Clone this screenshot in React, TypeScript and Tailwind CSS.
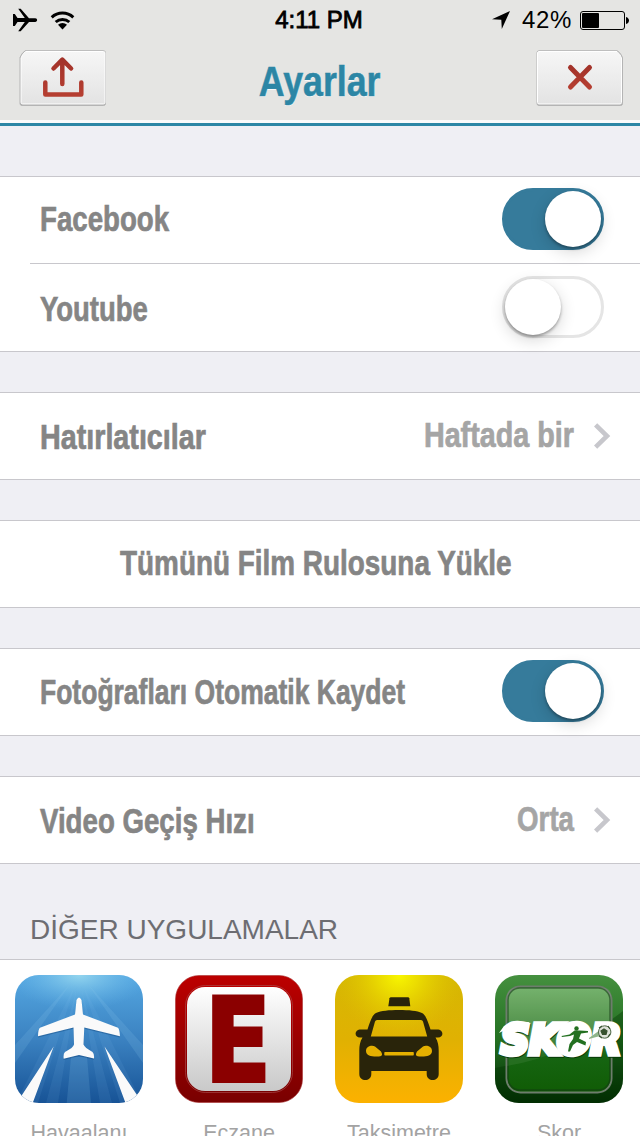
import type { ReactNode } from "react";
import clsx from "clsx";

const StatusBar = () => (
	<div className="grid h-10 grid-cols-3 items-center text-[24px] leading-10 text-black">
		<div className="flex items-center gap-3 pl-3">
			<svg width="26" height="24" viewBox="0 0 26 24">
				<path d="M1 6h1.800l2.700 3.900h7.300L6.200.8h2.500l8.300 9.400h6.200c2.600 0 2.600 3.700 0 3.700h-6.200L8.700 23.300H6.200l6.600-9.200H5.500L2.800 18H1V6z" />
			</svg>
			<svg width="26" height="20" viewBox="0 0 26 20" fill="none" stroke="#000" strokeWidth="3">
				<path d="M1.700 7.300a16 16 0 0 1 21.600 0M5.700 12a10.200 10.200 0 0 1 13.600 0" />
				<path d="M12.500 19.500 8 14.800a6.300 6.300 0 0 1 9 0z" fill="#000" stroke="none" />
			</svg>
		</div>
		<span className="text-center">
			<span className="inline-block pr-0.5 [-webkit-text-stroke:0.8px_#000]">4:11 PM</span>
		</span>
		<div className="flex items-center justify-end pr-[11px]">
			<svg width="18" height="18" viewBox="0 0 18 18" className="mr-3">
				<path d="M18 0 9.800 18 9.300 8.700 0 8.200z" />
			</svg>
			<span className="mr-2 w-[50px] tracking-[0.6px]">42%</span>
			<svg width="49" height="19" viewBox="0 0 49 19">
				<rect x=".5" y=".5" width="44" height="18" rx="2.500" fill="none" stroke="#000" />
				<rect x="2" y="2" width="17" height="15" rx="1" />
				<path d="M46 6c4 1 4 6 0 7z" />
			</svg>
		</div>
	</div>
);

const HeaderButton = ({ flip, label, children }: { flip?: boolean; label: string; children: ReactNode }) => (
	<button aria-label={label} className="h-[57px] w-[88px]">
		<svg width="88" height="57" viewBox="0 0 88 57" fill="none">
			<defs>
				<linearGradient id="btn" x1="0" y1="0" x2="0" y2="1">
					<stop offset="0" stopColor="#f6f6f6" />
					<stop offset="1" stopColor="#e3e3e3" />
				</linearGradient>
				<linearGradient id="red" x1="0" y1="0" x2="0" y2="1">
					<stop offset="0" stopColor="#a3332a" />
					<stop offset="1" stopColor="#b53e31" />
				</linearGradient>
			</defs>
			<g transform={flip ? "matrix(-1 0 0 1 87.500 0)" : undefined}>
				<path d="M6 .8h78.500q2 0 2 2V53.500q0 2-2 2H3q-2 0-2-2V7.500Q2.500 3.500 6 .8z" fill="#aaa" stroke="#b4b4b4" />
				<path d="M6.500 1.500h78q1.500 0 1.500 1.500V52.500q0 1.500-1.500 1.500H3.500Q2 54 2 52.500V8Q3 4.500 6.500 1.500z" fill="url(#btn)" stroke="#fff" />
			</g>
			{children}
		</svg>
	</button>
);

const Switch = ({ on }: { on?: boolean }) => (
	<span
		role="switch"
		aria-checked={!!on}
		className={clsx(
			"flex h-[62px] w-[102px] items-center rounded-full border-3",
			on ? "justify-end border-[#367b9b] bg-[#367b9b]" : "border-[#e5e5e5] bg-white"
		)}
	>
		<span className="size-14 rounded-full bg-white shadow-[0_2px_3px_rgba(0,0,0,0.32),0_5px_16px_rgba(0,0,0,0.16)]" />
	</span>
);

const Chevron = () => (
	<svg width="18" height="26" viewBox="0 0 18 26" fill="none" stroke="#c7c7cc" strokeWidth="4.600">
		<path d="M1.600 1.800 13 13 1.600 24.200" />
	</svg>
);

const Group = ({ children }: { children: ReactNode }) => (
	<section className="mb-10 border-y border-[#c8c7cc] bg-white">{children}</section>
);

const Row = ({ children }: { children: ReactNode }) => (
	<div className="flex h-[86px] items-center justify-between pl-10">{children}</div>
);

const label =
	"inline-block origin-left whitespace-nowrap font-bold leading-[84px] text-[#858585] [-webkit-text-stroke:0.7px_#858585]";
const value =
	"inline-block origin-right whitespace-nowrap font-bold leading-[80px] pb-0.5 text-[#a5a5a5] [-webkit-text-stroke:0.7px_#a5a5a5]";

const PlaneIcon = () => (
	<svg width="128" height="128" viewBox="0 0 128 128">
		<defs>
			<linearGradient id="sky" x1="0" y1="0" x2="0" y2="1">
				<stop offset="0" stopColor="#55a8e2" />
				<stop offset=".5" stopColor="#3b82c1" />
				<stop offset="1" stopColor="#175396" />
			</linearGradient>
			<radialGradient id="glow" cx=".5" cy="0" r=".55" gradientTransform="matrix(1 0 0 .5 0 0)">
				<stop offset="0" stopColor="#93d5ee" />
				<stop offset="1" stopColor="#65b4e7" stopOpacity="0" />
			</radialGradient>
			<clipPath id="skyClip">
				<rect width="128" height="128" rx="24" />
			</clipPath>
		</defs>
		<g clipPath="url(#skyClip)">
			<path d="M0 0h128v128H0z" fill="url(#sky)" />
			<path d="M0 0h128v128H0z" fill="url(#glow)" />
			<path d="M56 8 0 70v18zM72 8l56 62v18zM56 82h16l4 46H51.700z" fill="#8cc8f0" opacity=".17" />
			<path d="M60 10 5 120l18 8zM68 10l55 110-18 8zM62 12 31 128h12zM66 12l31 116H85z" fill="#8cc8f0" opacity=".09" />
			<path d="M38.700 71.500 7 120v8h10.700zM89.500 71.500 122 120v8h-11.500z" fill="#fafafa" />
			<path
				d="M61.500 25q2.500-5 5 0L68 39.500l35 13.300q1.500 1 2 8.500L69.300 52.500 68.500 69.500q1 3 9 7.500 2 2 1.500 6.500L64 80l-15.300 3.700Q48 79 50 77q8.500-4.500 9-7.500L58.500 52.500 23 61.300q0-7 2-8.500l35-13.300z"
				transform="translate(0 1.300)"
				fill="#0c3c70"
				opacity=".35"
			/>
			<path
				d="M61.500 25q2.500-5 5 0L68 39.500l35 13.300q1.500 1 2 8.500L69.300 52.500 68.500 69.500q1 3 9 7.500 2 2 1.500 6.500L64 80l-15.300 3.700Q48 79 50 77q8.500-4.500 9-7.500L58.500 52.500 23 61.300q0-7 2-8.500l35-13.300z"
				fill="#fafafa"
			/>
		</g>
	</svg>
);

const PharmacyIcon = () => (
	<svg width="128" height="128" viewBox="0 0 128 128">
		<defs>
			<linearGradient id="crimson" x1="0" y1="0" x2="0" y2="1">
				<stop offset="0" stopColor="#bc0000" />
				<stop offset="1" stopColor="#790000" />
			</linearGradient>
			<linearGradient id="paper" x1="0" y1="0" x2="0" y2="1">
				<stop offset="0" stopColor="#fff" />
				<stop offset="1" stopColor="#c9c9c9" />
			</linearGradient>
		</defs>
		<rect x=".5" y=".5" width="127" height="127" rx="23.500" fill="url(#crimson)" stroke="#a33" strokeOpacity=".6" />
		<rect x="10.500" y="10.500" width="107" height="107" rx="20" fill="url(#crimson)" stroke="#a84848" strokeWidth=".7" />
		<rect x="12" y="12" width="104" height="104" rx="18" fill="url(#paper)" />
		<text
			transform="translate(30 106) scale(.83 1)"
			fontFamily="DejaVu Sans"
			fontWeight="bold"
			fontSize="116"
			fill="#8b0000"
			stroke="#8b0000"
			strokeWidth="4"
		>
			E
		</text>
	</svg>
);

const TaxiIcon = () => (
	<svg width="128" height="128" viewBox="0 0 128 128">
		<defs>
			<linearGradient id="amber" x1="0" y1="0" x2="0" y2="1">
				<stop offset="0" stopColor="#d5b803" />
				<stop offset=".5" stopColor="#e0b102" />
				<stop offset="1" stopColor="#fcb100" />
			</linearGradient>
			<radialGradient id="shine" cx=".5" cy="0" r=".5">
				<stop offset="0" stopColor="#f9f700" />
				<stop offset=".3" stopColor="#f0e500" stopOpacity=".8" />
				<stop offset="1" stopColor="#e0c000" stopOpacity="0" />
			</radialGradient>
		</defs>
		<rect width="128" height="128" rx="24" fill="url(#amber)" />
		<rect width="128" height="128" rx="24" fill="url(#shine)" />
		<g fill="#29240a">
			<path d="M56 22.300h17q1 0 1.300 1l1 8H53.300l1.200-8q.3-1 1.500-1z" />
			<path
				fillRule="evenodd"
				d="M64 35c10 0 18 .8 23 3 4 2 6 9 8.500 16.500h6.500c7 0 7 8 1 8h-2.500c2.500 4 3.200 8 3.200 13V99c0 8-12 8-12 0v-3H36.300v3c0 8-12 8-12 0V75.500c0-5 .7-9 3.200-13H25c-6 0-6-8 1-8h6.500C35 47 37 40 41 38c5-2.200 13-3 23-3zM42 45q-1.500 0-2 1.500l-4.200 15h56.400l-4.200-15Q87.500 45 86 45z"
			/>
		</g>
		<g fill="#e5b000">
			<path d="M31 76c0-5 6-6 9-4.500l6 5c3 5-1 5-5 5-5 0-10-1-10-5.500zM97 76c0-5-6-6-9-4.500l-6 5c-3 5 1 5 5 5 5 0 10-1 10-5.500z" />
			<rect x="49.300" y="77" width="29.500" height="3.500" rx=".7" />
		</g>
	</svg>
);

const SkorIcon = () => (
	<svg width="128" height="128" viewBox="0 0 128 128">
		<defs>
			<linearGradient id="turf" x1="0" y1="0" x2="0" y2="1">
				<stop offset="0" stopColor="#45903f" />
				<stop offset=".5" stopColor="#237021" />
				<stop offset="1" stopColor="#022a03" />
			</linearGradient>
			<linearGradient id="pitch" x1="0" y1="0" x2="0" y2="1">
				<stop offset="0" stopColor="#6cad63" />
				<stop offset=".45" stopColor="#3f8438" />
				<stop offset=".65" stopColor="#166512" />
				<stop offset="1" stopColor="#105c05" />
			</linearGradient>
			<clipPath id="turfClip">
				<rect width="128" height="128" rx="24" />
			</clipPath>
		</defs>
		<g clipPath="url(#turfClip)">
			<path d="M0 0h128v128H0z" fill="url(#turf)" />
			<path d="M128 36v92H0V93q70-12 128-57z" fill="#003200" opacity=".38" />
			<rect x="11.500" y="11.500" width="105" height="106" rx="14" fill="url(#pitch)" stroke="#6d7d6c" strokeWidth="2" />
			<rect x="13" y="13" width="102" height="102" rx="12" fill="none" stroke="#123f13" strokeOpacity=".7" strokeWidth="1.500" />
			<path d="M12 91q62-11 104-46V20q0-7-7-7H20q-8 0-8 8z" fill="#fff" opacity=".07" />
		</g>
		<g fontFamily="DejaVu Sans" fontWeight="bold" fontStyle="italic" fontSize="40" strokeWidth="5.500">
			<text x="6.500" y="80" textLength="120" lengthAdjust="spacingAndGlyphs" fill="#063807" stroke="#063807">
				SKOR
			</text>
			<text x="6" y="78.800" textLength="120" lengthAdjust="spacingAndGlyphs" fill="#fff" stroke="#fff">
				SKOR
			</text>
		</g>
		{/* fills the counter of the O behind the player */}
		<path d="M68 54q8-6 20-4l4 4-8 22-14-2z" fill="#fff" />
		<path d="m4 58 5-7 9-4h16l-3 6H14z" fill="#fff" />
		<path d="m66.500 61 8-1.500 5-4 5 0 8.500.5 0 1.500-7 1-2 5 7 3.500-.5 3.500-8.500-3.500-4 3-3 6.500-2 0 1.500-7.500 3.500-5 1-4.500-4 1.500-8 1z" fill="#237021" />
		<circle cx="81.500" cy="53.500" r="2.200" fill="#237021" />
		<path d="m94 63 11-8v6l-11 3z" fill="#8fb58a" />
		<circle cx="109.700" cy="57" r="6.200" fill="#dde2d9" stroke="#4d6745" />
		<path d="m109 54 3 2-1 3.500h-3.500L106 56zM104 53l3-2M113 51l2 3M104 61l3 2M113 62l2-3" fill="#36512e" stroke="#36512e" strokeWidth="1.200" />
	</svg>
);

const apps = [
	{ name: "Havaalanı", Icon: PlaneIcon },
	{ name: "Eczane", Icon: PharmacyIcon },
	{ name: "Taksimetre", Icon: TaxiIcon },
	{ name: "Skor", Icon: SkorIcon },
];

export default function App() {
	return (
		<div className="flex h-[1136px] w-[640px] flex-col overflow-hidden bg-[#efeff4] font-['Liberation_Sans',sans-serif]">
			<header className="mb-[50px] h-[126px] shrink-0 border-b-3 border-[#2c86a5] bg-[#e5e5e3] shadow-[inset_0_-3px_0_#fafafa]">
				<StatusBar />
				<div className="flex items-start justify-between pl-[19px] pr-4 pt-2.5">
					<HeaderButton label="Paylaş">
						<path d="M43.300 34V10M34.500 18.500l8.800-8.800 8.800 8.800M26.300 32.500v12h36v-12" stroke="url(#red)" strokeWidth="4.500" strokeLinecap="round" strokeLinejoin="round" />
					</HeaderButton>
					<h1 className="origin-center scale-x-[0.83] pr-1 text-[43px] font-bold leading-[62px] text-[#2c86a5] [-webkit-text-stroke:0.6px_#2c86a5] [text-shadow:0_1px_0_#fff]">
						Ayarlar
					</h1>
					<HeaderButton label="Kapat" flip>
						<path d="m34.500 17.500 19 19.500m0-19.500-19 19.500" stroke="url(#red)" strokeWidth="5" strokeLinecap="round" />
					</HeaderButton>
				</div>
			</header>

			<main className="shrink-0 text-[35px]">
				<Group>
					<Row>
						<span className={clsx(label, "scale-x-[0.79] pb-0.5")}>Facebook</span>
						<div className="pb-0.5 pr-9"><Switch on /></div>
					</Row>
					<div className="ml-[30px] h-px bg-[#c8c7cc]" />
					<div className="flex h-[87px] items-center justify-between pl-10 pr-9">
						<span className={clsx(label, "scale-x-[0.785] pt-0.5")}>Youtube</span>
						<div className="pb-px"><Switch /></div>
					</div>
				</Group>
				<Group>
					<Row>
						<span className={clsx(label, "scale-x-[0.82] pt-0.5")}>Hatırlatıcılar</span>
						<span className="flex items-center gap-5 pr-7">
							<span className={clsx(value, "scale-x-[0.82]")}>Haftada bir</span>
							<Chevron />
						</span>
					</Row>
				</Group>
				<Group>
					<div className="h-[86px] pl-[120px]">
						<span className={clsx(label, "scale-x-[0.797]")}>Tümünü Film Rulosuna Yükle</span>
					</div>
				</Group>
				<Group>
					<Row>
						<span className={clsx(label, "scale-x-[0.757]")}>Fotoğrafları Otomatik Kaydet</span>
						<div className="-ml-40 pb-0.5 pr-9"><Switch on /></div>
					</Row>
				</Group>
				<Group>
					<Row>
						<span className={clsx(label, "scale-x-[0.79] pt-0.5")}>Video Geçiş Hızı</span>
						<span className="flex items-center gap-5 pr-7">
							<span className={clsx(value, "scale-x-[0.79]")}>Orta</span>
							<Chevron />
						</span>
					</Row>
				</Group>
			</main>

			<h2 className="h-[55px] shrink-0 whitespace-nowrap pl-[30px] pt-2.5 text-[28px] leading-[32px] text-[#6d6d72]">
				DİĞER UYGULAMALAR
			</h2>
			<div className="grid shrink-0 grid-cols-4 border-t border-[#c8c7cc] bg-white pt-[15px]">
				{apps.map(({ name, Icon }) => (
					<div key={name} className="flex flex-col items-center">
						<div className="pr-0.5"><Icon /></div>
						<span className="mt-[17px] pr-0.5 text-[21.5px] leading-[26px] text-[#a3a3a3]">{name}</span>
					</div>
				))}
			</div>
		</div>
	);
}
